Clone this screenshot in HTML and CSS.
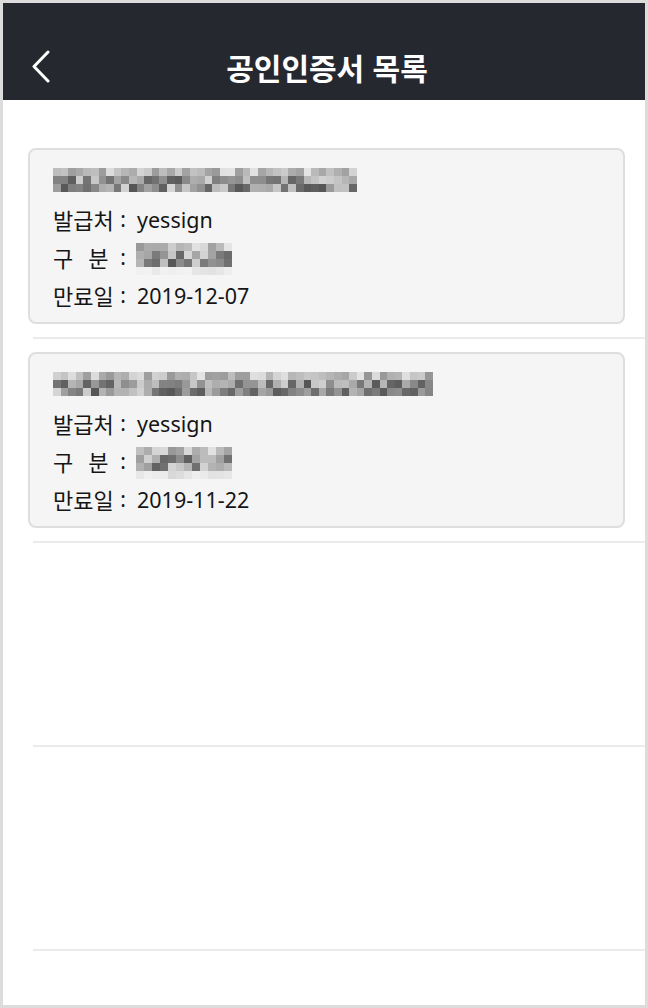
FILE: index.html
```html
<!DOCTYPE html>
<html lang="ko">
<head>
    <meta charset="UTF-8">
    <meta name="viewport" content="width=device-width, initial-scale=1.0">
    <title>공인인증서 목록</title>
    <link rel="stylesheet" href="styles.css">
</head>
<body>
    <div class="app">
        <div class="header">
            <button class="back" aria-label="뒤로">
                <svg width="22" height="34" viewBox="0 0 22 34">
                    <path d="M18 2 L4 16.5 L18 31" fill="none" stroke="#fff" stroke-width="3" stroke-linecap="round" stroke-linejoin="round"/>
                </svg>
            </button>
            <h1 class="title">공인인증서 목록</h1>
            <span></span>
        </div>

        <div class="list">
            <div class="item">
                <div class="card">
                    <div class="line"><div class="mosaic" data-cols="40" data-rows="3" data-seed="7"></div></div>
                    <div class="line"><span class="lbl">발급처</span><span class="colon">:</span><span class="val">yessign</span></div>
                    <div class="line"><span class="lbl">구<span class="sp"></span>분</span><span class="colon">:</span><div class="mosaic small" data-cols="12" data-rows="4" data-seed="21"></div></div>
                    <div class="line"><span class="lbl">만료일</span><span class="colon">:</span><span class="val">2019-12-07</span></div>
                </div>
            </div>
            <div class="item">
                <div class="card">
                    <div class="line"><div class="mosaic" data-cols="50" data-rows="3" data-seed="13"></div></div>
                    <div class="line"><span class="lbl">발급처</span><span class="colon">:</span><span class="val">yessign</span></div>
                    <div class="line"><span class="lbl">구<span class="sp"></span>분</span><span class="colon">:</span><div class="mosaic small" data-cols="12" data-rows="4" data-seed="33"></div></div>
                    <div class="line"><span class="lbl">만료일</span><span class="colon">:</span><span class="val">2019-11-22</span></div>
                </div>
            </div>
            <div class="item empty"></div>
            <div class="item empty"></div>
        </div>
    </div>

    <script>
        // blurred (pixelated) personal info
        let mosaics = document.querySelectorAll('.mosaic');
        mosaics.forEach(function (m) {
            let cols = +m.dataset.cols;
            let rows = +m.dataset.rows;
            let seed = +m.dataset.seed;
            function rnd() {
                seed = (seed * 9301 + 49297) % 233280;
                return seed / 233280;
            }
            m.style.setProperty('--cols', cols);
            for (let r = 0; r < rows; r++) {
                for (let c = 0; c < cols; c++) {
                    let g;
                    if (r === rows - 1 && rows > 3) {
                        g = 215 + Math.floor(rnd() * 30);
                    } else if (r === 0) {
                        g = 150 + Math.floor(rnd() * 80);
                    } else {
                        g = 85 + Math.floor(rnd() * 130);
                    }
                    let cell = document.createElement('i');
                    cell.style.background = `rgb(${g},${g},${g})`;
                    m.appendChild(cell);
                }
            }
        });
    </script>
</body>
</html>
```

FILE: styles.css
```css
* {
  box-sizing: border-box;
}

body {
  margin: 0;
  background: #fff;
  font-family: "Noto Sans", "Noto Sans CJK KR", sans-serif;
  color: #151515;
}

.app {
  height: 1008px;
  border: 3px solid #dcdcdc;
  overflow: hidden;
  background: #fff;
}

.header {
  height: 97px;
  padding: 30px 27px 0 27px;
  background-color: #262830;
  display: grid;
  grid-template-columns: 50px 1fr 50px;
  align-items: center;
}

.back {
  width: 22px;
  height: 34px;
  padding: 0;
  border: none;
  background: none;
  cursor: pointer;
  display: flex;
}

.title {
  margin: 0;
  text-align: center;
  color: #fff;
  font-family: "Noto Sans CJK KR", sans-serif;
  font-size: 30px;
  font-weight: 700;
  padding-left: 6px;
}

.list {
  padding-top: 35px;
}

.item {
  margin-left: 30px;
  padding: 13px 0 13px 0;
  border-bottom: 2px solid #ebebeb;
}

.item.empty {
  height: 204px;
}

.card {
  margin-left: -5px;
  margin-right: 20px;
  height: 176px;
  padding: 12px 20px 8px 23px;
  border: 2px solid #dedede;
  border-radius: 8px;
  background-color: #f5f5f5;
}

.line {
  height: 38px;
  display: flex;
  align-items: center;
  font-size: 21px;
}

.lbl {
  flex-shrink: 0;
  width: 65px;
  font-family: "Noto Sans CJK KR", sans-serif;
  font-size: 22px;
  white-space: nowrap;
}

.sp {
  display: inline-block;
  width: 15px;
}

.colon {
  width: 10px;
  text-align: center;
}

.val {
  margin-left: 9px;
  font-size: 21.5px;
}

.mosaic {
  display: grid;
  grid-template-columns: repeat(var(--cols), 7.6px);
  grid-auto-rows: 8px;
  margin-top: -2px;
}

.mosaic.small {
  grid-template-columns: repeat(var(--cols), 8px);
  margin-left: 8px;
  margin-top: 4px;
}

.mosaic i {
  display: block;
}
```
